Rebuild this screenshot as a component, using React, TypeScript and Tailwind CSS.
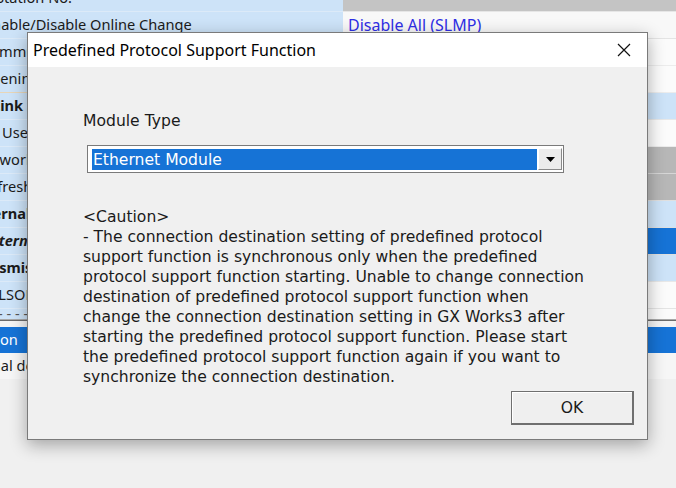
import React from "react";

type Row = {
  text: string;
  leftCls: string;
  rightCls: string;
  right?: React.ReactNode;
  h: string;
};

const rows: Row[] = [
  { text: "Station No.", leftCls: "ml-[-4px]", rightCls: "bg-[#c4c4c4] border-b border-[#e6e6e6]", h: "h-[27px]" },
  {
    text: "Enable/Disable Online Change",
    leftCls: "ml-[-16px]",
    rightCls: "bg-[#f8f8f8] border-b border-[#e4e4e4]",
    right: <span className="pl-[5px] text-[16px] text-[#2f2fe6]">Disable All (SLMP)</span>,
    h: "h-[27px]",
  },
  { text: "Communication Data Code", leftCls: "ml-[-19px]", rightCls: "bg-[#fbfbfb] border-b border-[#ececec]", h: "h-[27px]" },
  { text: "Opening Method", leftCls: "ml-[-20px]", rightCls: "bg-[#fbfbfb] border-b border-[#ececec]", h: "h-[27px]" },
  { text: "Link Scan", leftCls: "ml-[-8px] font-bold", rightCls: "bg-[#cde3f8] border-b border-[#e8e8e8]", h: "h-[27px]" },
  { text: "User Connection", leftCls: "ml-[2px]", rightCls: "bg-[#fbfbfb] border-b border-[#ececec]", h: "h-[27px]" },
  { text: "Network Configuration", leftCls: "ml-[-25px]", rightCls: "bg-[#b7b7b7] border-b border-[#d6d6d6]", h: "h-[27px]" },
  { text: "Refresh Settings", leftCls: "ml-[-20px]", rightCls: "bg-[#b7b7b7] border-b border-[#e0e0e0]", h: "h-[27px]" },
  { text: "Internal", leftCls: "ml-[-29px] font-bold", rightCls: "bg-[#cde3f8] border-b border-[#e0e0e0]", h: "h-[27px]" },
  { text: "External Device", leftCls: "ml-[-17px] font-bold italic", rightCls: "bg-[#1673d6] border-b border-[#e0e0e0]", h: "h-[27px]" },
  { text: "Transmission", leftCls: "ml-[-33px] font-bold", rightCls: "bg-[#cde3f8] border-b border-[#e8e8e8]", h: "h-[27px]" },
  { text: "MELSOFT Connection", leftCls: "ml-[-23px]", rightCls: "bg-[#fbfbfb] border-b border-[#e4e4e4]", h: "h-[27px]" },
];

const caution = [
  "<Caution>",
  "- The connection destination setting of predefined protocol",
  "support function is synchronous only when the predefined",
  "protocol support function starting. Unable to change connection",
  "destination of predefined protocol support function when",
  "change the connection destination setting in GX Works3 after",
  "starting the predefined protocol support function. Please start",
  "the predefined protocol support function again if you want to",
  "synchronize the connection destination.",
];

export default function App() {
  return (
    <div className="relative w-[676px] h-[488px] overflow-hidden bg-[#f0f0f0] font-['Noto_Sans',sans-serif] text-[14.6px] text-[#1b1b1b]">
      {/* background property grid */}
      <div className="flex flex-col mt-[-15px]">
        {rows.map((r, i) => (
          <div key={i} className={"flex " + r.h}>
            <div
              className={
                "w-[343px] bg-[#cde3f8] flex items-center overflow-hidden whitespace-nowrap border-b " +
                (i === 3 ? "border-[#e8d6b8]" : "border-[#dceaf8]")
              }
            >
              <span className={r.leftCls}>{r.text}</span>
            </div>
            <div className={"flex-1 flex items-center " + r.rightCls}>{r.right}</div>
          </div>
        ))}
        <div className="flex h-[10px] overflow-hidden">
          <div className="w-[343px] bg-[#cde3f8] flex items-start overflow-hidden whitespace-nowrap leading-[8px] text-[#555]">
            <span className="ml-[-2px]">- - - - - - - -</span>
          </div>
          <div className="flex-1 bg-[#fbfbfb]" />
        </div>
        <div className="h-[1px] bg-[#a8a8a8]" />
        <div className="h-[1px] bg-[#6c6c6c]" />
        <div className="h-[6px] bg-[#f4f4f4]" />
        <div className="h-[26px] bg-[#1673d6] flex items-center overflow-hidden whitespace-nowrap text-white">
          <span className="ml-[-63px]">Explanation</span>
        </div>
        <div className="h-[26px] bg-[#f6f6f6] flex items-center overflow-hidden whitespace-nowrap">
          <span className="ml-[-95px]">Set the external device</span>
        </div>
      </div>

      {/* dialog window */}
      <div className="absolute left-[27px] top-[32px] w-[621px] h-[408px] border border-[#7a7a7a] bg-[#f0f0f0] shadow-[0_5px_16px_rgba(0,0,0,0.32)] flex flex-col">
        <div className="h-[34px] bg-white flex items-center pl-[5px] pr-[16px]">
          <span className="font-['Noto_Sans',sans-serif] text-[16px] text-black">
            Predefined Protocol Support Function
          </span>
          <svg className="ml-auto" width="14" height="14" viewBox="0 0 14 14">
            <path d="M1 1 L13 13 M13 1 L1 13" stroke="#111" strokeWidth="1.2" fill="none" />
          </svg>
        </div>
        <div className="flex-1 flex flex-col pl-[55px] pr-[13px] font-['DejaVu_Sans',sans-serif] text-[15.6px] leading-[20px] text-[#1a1a1a]">
          <div className="mt-[44px]">Module Type</div>
          <div className="mt-[14px] ml-[4px] w-[477px] h-[28px] border border-[#7a7a7a] bg-white flex p-[2px] pr-[1px]">
            <div className="flex-1 ml-[2px] mt-[1px] bg-[#1673d6] flex items-center text-white pl-[1px]">
              Ethernet Module
            </div>
            <div className="w-[24px] ml-[1px] bg-[#ececec] border-l border-t border-white border-r border-b border-r-[#8a8a8a] border-b-[#8a8a8a] flex items-center justify-center">
              <svg width="9" height="5" viewBox="0 0 9 5">
                <path d="M0 0 H9 L4.5 5 Z" fill="#000" />
              </svg>
            </div>
          </div>
          <div className="mt-[34px] whitespace-pre">
            {caution.map((l, i) => (
              <div key={i}>{l}</div>
            ))}
          </div>
          <div className="mt-auto mb-[14px] self-end w-[123px] h-[34px] border border-[#6f6f6f] border-r-2 border-b-2 bg-[#efefef] shadow-[inset_1px_1px_0_#ffffff] flex items-center justify-center">
            OK
          </div>
        </div>
      </div>
    </div>
  );
}
